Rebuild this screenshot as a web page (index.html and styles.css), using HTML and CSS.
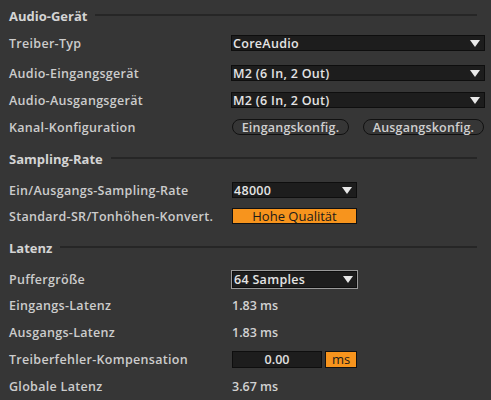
FILE: index.html
```html
<!DOCTYPE html>
<html lang="de">
<head>
<meta charset="utf-8">
<link rel="stylesheet" href="styles.css">
</head>
<body>
<div class="prefs">
  <div class="section-head mt6"><span class="section-title">Audio-Gerät</span><span class="rule"></span></div>
  <div class="row mt4">
    <span class="label">Treiber-Typ</span>
    <div class="select wide"><span>CoreAudio</span><span class="arrow"></span></div>
  </div>
  <div class="row mt4">
    <span class="label">Audio-Eingangsgerät</span>
    <div class="select wide"><span>M2 (6 In, 2 Out)</span><span class="arrow"></span></div>
  </div>
  <div class="row mt1">
    <span class="label">Audio-Ausgangsgerät</span>
    <div class="select wide"><span>M2 (6 In, 2 Out)</span><span class="arrow"></span></div>
  </div>
  <div class="row mt1">
    <span class="label">Kanal-Konfiguration</span>
    <div class="pills">
      <span class="pill in">Eingangskonfig.</span>
      <span class="pill out">Ausgangskonfig.</span>
    </div>
  </div>

  <div class="section-head mt9"><span class="section-title">Sampling-Rate</span><span class="rule"></span></div>
  <div class="row mt8">
    <span class="label">Ein/Ausgangs-Sampling-Rate</span>
    <div class="select narrow"><span>48000</span><span class="arrow"></span></div>
  </div>
  <div class="row">
    <span class="label">Standard-SR/Tonhöhen-Konvert.</span>
    <div class="toggle narrow">Hohe Qualität</div>
  </div>

  <div class="section-head mt9"><span class="section-title">Latenz</span><span class="rule"></span></div>
  <div class="row short mt9">
    <span class="label">Puffergröße</span>
    <div class="select narrow focused"><span>64 Samples</span><span class="arrow"></span></div>
  </div>
  <div class="row">
    <span class="label">Eingangs-Latenz</span>
    <span class="value">1.83 ms</span>
  </div>
  <div class="row mt1">
    <span class="label">Ausgangs-Latenz</span>
    <span class="value">1.83 ms</span>
  </div>
  <div class="row mt1">
    <span class="label">Treiberfehler-Kompensation</span>
    <div class="comp">
      <span class="numbox">0.00</span>
      <span class="unit">ms</span>
    </div>
  </div>
  <div class="row mt1">
    <span class="label">Globale Latenz</span>
    <span class="value">3.67 ms</span>
  </div>
</div>
</body>
</html>
```

FILE: styles.css
```css
html, body {
  margin: 0;
  padding: 0;
  background: #363636;
}
body {
  width: 491px;
  height: 400px;
  overflow: hidden;
  font-family: "Open Sans", Lato, "DejaVu Sans", sans-serif;
  font-weight: 600;
  font-size: 12.5px;
  color: #cccccc;
}
.prefs {
  display: flex;
  flex-direction: column;
  padding: 0 6px 0 9px;
}
.mt1 { margin-top: 1px; }
.mt4 { margin-top: 4px; }
.mt6 { margin-top: 6px; }
.mt8 { margin-top: 8px; }
.mt9 { margin-top: 9px; }

.section-head {
  height: 20px;
  display: flex;
  align-items: center;
}
.section-title {
  color: #d4d4d4;
  font-size: 13px;
  font-weight: 700;
}
.rule {
  flex: 1;
  height: 2px;
  background: #262626;
  margin: 0 8px 2px 8px;
}

.row {
  height: 26px;
  display: flex;
  align-items: center;
}
.row.short { height: 25px; }
.label {
  width: 222px;
  flex: none;
  letter-spacing: 0.3px;
}

.select {
  box-sizing: border-box;
  height: 16px;
  background: #1d1d1d;
  border: 1px solid #0e0e0e;
  display: flex;
  align-items: center;
  justify-content: space-between;
  padding: 0 4px 0 1px;
  color: #e4e4e4;
  font-size: 12.5px;
  letter-spacing: 0.3px;
}
.select.wide { width: 254px; }
.select.narrow { width: 125px; margin-left: 1px; }
.select.focused {
  height: 19px;
  width: 127px;
  margin-left: 0;
  border: 1px solid #9a9a9a;
  box-shadow: inset 0 0 0 1px #0e0e0e;
  padding-left: 2px;
}
.arrow {
  width: 0;
  height: 0;
  border-left: 5px solid transparent;
  border-right: 5px solid transparent;
  border-top: 7px solid #e8e8e8;
}

.pills {
  display: flex;
  gap: 14px;
  margin-left: 1px;
}
.pill {
  box-sizing: border-box;
  height: 16px;
  border: 1px solid #111;
  border-radius: 8px;
  display: flex;
  align-items: center;
  justify-content: center;
  color: #cfcfcf;
  font-size: 12.5px;
  letter-spacing: 0.2px;
}
.pill.in { width: 117px; }
.pill.out { width: 121px; }

.toggle {
  box-sizing: border-box;
  height: 16px;
  background: #f7941d;
  border: 1px solid #111;
  color: #1a1a1a;
  display: flex;
  align-items: center;
  justify-content: center;
  font-size: 13px;
  font-weight: 500;
  width: 125px;
  margin-left: 1px;
}

.value {
  margin-left: 1px;
  color: #d2d2d2;
  font-size: 12.5px;
}

.comp {
  display: flex;
  gap: 3px;
  margin-left: 1px;
}
.numbox {
  box-sizing: border-box;
  width: 90px;
  height: 17px;
  background: #1d1d1d;
  border: 1px solid #0e0e0e;
  color: #e0e0e0;
  display: flex;
  align-items: center;
  justify-content: center;
  font-size: 12.5px;
}
.unit {
  box-sizing: border-box;
  width: 32px;
  height: 17px;
  background: #f7941d;
  border: 1px solid #111;
  color: #1a1a1a;
  display: flex;
  align-items: center;
  justify-content: center;
  font-size: 13px;
  font-weight: 500;
}
```
